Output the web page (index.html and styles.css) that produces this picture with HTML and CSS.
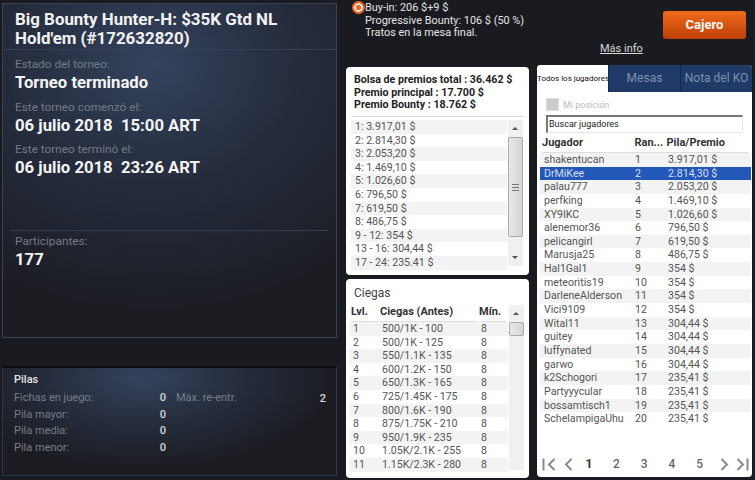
FILE: index.html
```html
<!DOCTYPE html>
<html lang="en">

<head>
    <meta charset="UTF-8">
    <title>Torneo</title>
    <link rel="stylesheet" href="styles.css">
</head>

<body>

    <div class="left">
        <div class="panel info">
            <h1>Big Bounty Hunter-H: $35K Gtd NL Hold'em (#172632820)</h1>
            <div class="info-body">
                <div class="label">Estado del torneo:</div>
                <div class="value status">Torneo terminado</div>
                <div class="label">Este torneo comenzó el:</div>
                <div class="value">06 julio 2018&nbsp; 15:00 ART</div>
                <div class="label">Este torneo terminó el:</div>
                <div class="value">06 julio 2018&nbsp; 23:26 ART</div>
            </div>
            <div class="players">
                <div class="label">Participantes:</div>
                <div class="value">177</div>
            </div>
        </div>

        <div class="panel stacks">
            <div class="stacks-title">Pilas</div>
            <div class="stacks-grid">
                <div class="stack-rows">
                    <div class="stack-row"><span>Fichas en juego:</span><b>0</b></div>
                    <div class="stack-row"><span>Pila mayor:</span><b>0</b></div>
                    <div class="stack-row"><span>Pila media:</span><b>0</b></div>
                    <div class="stack-row"><span>Pila menor:</span><b>0</b></div>
                </div>
                <div class="stack-row reentry"><span>Máx. re-entr.</span><b>2</b></div>
            </div>
        </div>
    </div>

    <div class="right">
        <div class="top">
            <div class="radio"></div>
            <div class="buyin">
                <div>Buy-in: 206 $+9 $</div>
                <div>Progressive Bounty: 106 $ (50 %)</div>
                <div>Tratos en la mesa final.</div>
            </div>
            <a class="more">Más info</a>
            <div class="cashier">Cajero</div>
        </div>

        <div class="columns">
            <div class="middle">
                <div class="card prizes">
                    <div class="prize-head">
                        <div>Bolsa de premios total : 36.462 $</div>
                        <div>Premio principal : 17.700 $</div>
                        <div>Premio Bounty : 18.762 $</div>
                    </div>
                    <div class="scroll-area">
                        <div class="rows">
                            <div class="row">1: 3.917,01 $</div>
                            <div class="row">2: 2.814,30 $</div>
                            <div class="row">3: 2.053,20 $</div>
                            <div class="row">4: 1.469,10 $</div>
                            <div class="row">5: 1.026,60 $</div>
                            <div class="row">6: 796,50 $</div>
                            <div class="row">7: 619,50 $</div>
                            <div class="row">8: 486,75 $</div>
                            <div class="row">9 - 12: 354 $</div>
                            <div class="row">13 - 16: 304,44 $</div>
                            <div class="row">17 - 24: 235.41 $</div>
                        </div>
                        <div class="scrollbar">
                            <div class="arrow up"></div>
                            <div class="thumb long"><div class="grip"></div></div>
                            <div class="arrow down"></div>
                        </div>
                    </div>
                </div>

                <div class="card blinds">
                    <div class="blinds-title">Ciegas</div>
                    <div class="scroll-area">
                        <div class="rows">
                            <div class="blinds-head"><span>Lvl.</span><span>Ciegas (Antes)</span><span>Mín.</span></div>
                            <div class="row blind"><span>1</span><span>500/1K - 100</span><span>8</span></div>
                            <div class="row blind"><span>2</span><span>500/1K - 125</span><span>8</span></div>
                            <div class="row blind"><span>3</span><span>550/1.1K - 135</span><span>8</span></div>
                            <div class="row blind"><span>4</span><span>600/1.2K - 150</span><span>8</span></div>
                            <div class="row blind"><span>5</span><span>650/1.3K - 165</span><span>8</span></div>
                            <div class="row blind"><span>6</span><span>725/1.45K - 175</span><span>8</span></div>
                            <div class="row blind"><span>7</span><span>800/1.6K - 190</span><span>8</span></div>
                            <div class="row blind"><span>8</span><span>875/1.75K - 210</span><span>8</span></div>
                            <div class="row blind"><span>9</span><span>950/1.9K - 235</span><span>8</span></div>
                            <div class="row blind"><span>10</span><span>1.05K/2.1K - 255</span><span>8</span></div>
                            <div class="row blind"><span>11</span><span>1.15K/2.3K - 280</span><span>8</span></div>
                        </div>
                        <div class="scrollbar blinds-bar">
                            <div class="arrow up"></div>
                            <div class="thumb"></div>
                        </div>
                    </div>
                </div>
            </div>

            <div class="card players-card">
                <div class="tabs">
                    <div class="tab active">Todos los jugadores</div>
                    <div class="tab tables">Mesas</div>
                    <div class="tab note">Nota del KO</div>
                </div>
                <div class="my-pos"><span class="checkbox"></span>Mi posición</div>
                <div class="search">Buscar jugadores</div>
                <div class="players-head"><span>Jugador</span><span>Ran...</span><span>Pila/Premio</span></div>
                <div class="player-rows">
                    <div class="row player"><span>shakentucan</span><span>1</span><span>3.917,01 $</span></div>
                    <div class="row player selected"><span>DrMiKee</span><span>2</span><span>2.814,30 $</span></div>
                    <div class="row player"><span>palau777</span><span>3</span><span>2.053,20 $</span></div>
                    <div class="row player"><span>perfking</span><span>4</span><span>1.469,10 $</span></div>
                    <div class="row player"><span>XY9IKC</span><span>5</span><span>1.026,60 $</span></div>
                    <div class="row player"><span>alenemor36</span><span>6</span><span>796,50 $</span></div>
                    <div class="row player"><span>pelicangirl</span><span>7</span><span>619,50 $</span></div>
                    <div class="row player"><span>Marusja25</span><span>8</span><span>486,75 $</span></div>
                    <div class="row player"><span>Hal1Gal1</span><span>9</span><span>354 $</span></div>
                    <div class="row player"><span>meteoritis19</span><span>10</span><span>354 $</span></div>
                    <div class="row player"><span>DarleneAlderson</span><span>11</span><span>354 $</span></div>
                    <div class="row player"><span>Vici9109</span><span>12</span><span>354 $</span></div>
                    <div class="row player"><span>Wital11</span><span>13</span><span>304,44 $</span></div>
                    <div class="row player"><span>guitey</span><span>14</span><span>304,44 $</span></div>
                    <div class="row player"><span>luffynated</span><span>15</span><span>304,44 $</span></div>
                    <div class="row player"><span>garwo</span><span>16</span><span>304,44 $</span></div>
                    <div class="row player"><span>k2Schogori</span><span>17</span><span>235,41 $</span></div>
                    <div class="row player"><span>Partyyycular</span><span>18</span><span>235,41 $</span></div>
                    <div class="row player"><span>bossamtisch1</span><span>19</span><span>235,41 $</span></div>
                    <div class="row player"><span>SchelampigaUhu</span><span>20</span><span>235,41 $</span></div>
                </div>
                <div class="pager">
                    <svg width="15" height="13" viewBox="0 0 15 13"><path d="M1.5 0.5V12.5M12.5 1L7 6.5L12.5 12" fill="none" stroke="#8a8a8a" stroke-width="2"/></svg>
                    <svg class="prev" width="9" height="13" viewBox="0 0 9 13"><path d="M7.5 1L2 6.5L7.5 12" fill="none" stroke="#8a8a8a" stroke-width="2"/></svg>
                    <span class="page current">1</span>
                    <span class="page">2</span>
                    <span class="page">3</span>
                    <span class="page">4</span>
                    <span class="page">5</span>
                    <svg class="next" width="9" height="13" viewBox="0 0 9 13"><path d="M1.5 1L7 6.5L1.5 12" fill="none" stroke="#8a8a8a" stroke-width="2"/></svg>
                    <svg class="last" width="13" height="13" viewBox="0 0 13 13"><path d="M11.5 0.5V12.5M1.5 1L7 6.5L1.5 12" fill="none" stroke="#8a8a8a" stroke-width="2"/></svg>
                </div>
            </div>
        </div>
    </div>

</body>

</html>
```

FILE: styles.css
```css
html,
body {
    height: 100%;
}

body {
    margin: 0;
    width: 755px;
    height: 480px;
    overflow: hidden;
    display: flex;
    background-color: #1a1b20;
    font-family: Roboto, sans-serif;
    color: #333;
}

/* left column */
.left {
    width: 335px;
    margin-left: 2px;
    padding-top: 3px;
    flex-shrink: 0;
}

.panel {
    box-sizing: border-box;
    border: 1px solid #3a4356;
    background: radial-gradient(ellipse 300px 250px at 45% 60px, #34435e 0%, #242b3b 50%, #1c1d23 100%);
}

.info {
    height: 335px;
}

h1 {
    margin: 0;
    padding: 6px 12px 1px;
    font-size: 16.9px;
    line-height: 19px;
    font-weight: 700;
    color: #f2f2f2;
    border-bottom: 1px solid #36405a;
}

.info-body {
    padding: 6px 12px 0;
    height: 174px;
}

.label {
    font-size: 11.8px;
    line-height: 16px;
    color: #747a85;
}

.value {
    font-size: 16.7px;
    line-height: 20px;
    font-weight: 700;
    color: #f4f4f4;
    margin: 1px 0 5px;
}

.value.status {
    margin-bottom: 6px;
}

.players {
    margin: 0 8px;
    padding: 2px 4px 0;
    border-top: 1px solid #333c50;
}

.stacks {
    height: 110px;
    margin-top: 28px;
    padding: 5px 10px 0 11px;
    border-color: #2f384a;
    border-top: 2px solid #0d0d10;
    background: radial-gradient(ellipse 190px 90px at 42% 10px, #34435e 0%, #232937 60%, #1c1d23 100%);
}

.stacks-title {
    font-size: 11px;
    line-height: 14px;
    font-weight: 500;
    color: #e4e4e4;
}

.stacks-grid {
    display: flex;
    margin-top: 3px;
}

.stack-rows {
    width: 152px;
}

.stack-row {
    display: flex;
    justify-content: space-between;
    font-size: 11px;
    line-height: 16.7px;
    color: #777d88;
}

.stack-row b {
    color: #d8d8d8;
    font-weight: 500;
}

.reentry {
    margin-left: 10px;
    flex-grow: 1;
}

.reentry b {
    margin-top: 1px;
}

/* right side */
.right {
    margin-left: 9px;
    width: 409px;
    flex-shrink: 0;
}

.top {
    box-sizing: border-box;
    height: 65px;
    padding: 1px 0 0 6px;
    position: relative;
    display: flex;
    font-size: 10.9px;
    line-height: 12.5px;
    color: #e4e4e4;
}

.radio {
    width: 13px;
    height: 13px;
    border-radius: 50%;
    background: radial-gradient(circle, #f0661e 0 2.4px, #fbf3ee 2.9px 4px, #f0661e 4.5px);
}

.buyin {
    margin-top: 1px;
}

.more {
    position: absolute;
    left: 254px;
    top: 42px;
    font-size: 11px;
    line-height: 14px;
    text-decoration: underline;
    color: #d8d8d8;
}

.cashier {
    position: absolute;
    left: 317px;
    top: 11px;
    width: 83px;
    height: 28px;
    border-radius: 3px;
    background: linear-gradient(#ee6c1b, #bf3f06);
    color: #f6f6f6;
    font-size: 13px;
    font-weight: 700;
    line-height: 28px;
    text-align: center;
}

.columns {
    display: flex;
    align-items: flex-start;
}

.middle {
    width: 183px;
    margin-top: 2px;
    margin-right: 8px;
}

.card {
    background-color: #fff;
    border-radius: 4px;
    overflow: hidden;
}

.prizes {
    height: 208px;
    padding: 7px 6px 0 5px;
    box-sizing: border-box;
}

.prize-head {
    padding: 0 3px 4px;
    font-size: 10.7px;
    line-height: 12.5px;
    font-weight: 700;
    color: #222;
    border-bottom: 1px solid #ddd;
    margin-bottom: 3px;
    height: 38px;
}

.scroll-area {
    display: flex;
}

.rows {
    flex-grow: 1;
    min-width: 0;
}

.row {
    height: 13.6px;
    font-size: 10.6px;
    line-height: 13.6px;
    color: #555;
    padding-left: 4px;
    white-space: nowrap;
    overflow: hidden;
}

.row:nth-child(odd) {
    background-color: #f3f3f3;
}

.scrollbar {
    width: 15px;
    height: 146px;
    margin-left: 1px;
    display: flex;
    flex-direction: column;
    background-color: #f0f0f0;
    flex-shrink: 0;
}

.arrow {
    height: 17px;
    position: relative;
}

.arrow::after {
    content: "";
    position: absolute;
    left: 4px;
    top: 7px;
    border-left: 3px solid transparent;
    border-right: 3px solid transparent;
}

.arrow.up::after {
    border-bottom: 3px solid #555;
}

.arrow.down {
    margin-top: auto;
}

.arrow.down::after {
    border-top: 3px solid #555;
}

.thumb {
    box-sizing: border-box;
    height: 14px;
    border: 1px solid #aaa;
    border-radius: 2px;
    background: linear-gradient(90deg, #e8e8e8, #d4d4d4);
}

.thumb.long {
    height: 100px;
    display: flex;
    align-items: center;
    justify-content: center;
}

.grip {
    width: 7px;
    height: 7px;
    background: repeating-linear-gradient(#777 0 1px, transparent 1px 3px);
}

.blinds {
    height: 199px;
    margin-top: 4px;
    padding: 0 5px 0 3px;
    box-sizing: border-box;
}

.blinds-title {
    font-size: 12px;
    line-height: 14px;
    padding: 7px 5px 5px;
    color: #444;
}

.blinds-head {
    display: grid;
    grid-template-columns: 29px 99px 1fr;
    font-size: 11px;
    line-height: 14px;
    font-weight: 700;
    color: #333;
    padding-left: 2px;
}

.blinds-head span {
    height: 16px;
    border-bottom: 1px solid #ddd;
    margin-right: 2px;
}

.blind {
    display: grid;
    grid-template-columns: 29px 99px 1fr;
}

.blinds .row:nth-child(odd) {
    background-color: transparent;
}

.blinds .row:nth-child(even) {
    background-color: #f3f3f3;
}

.blinds-bar {
    height: 165px;
    width: 15px;
}

/* player list */
.players-card {
    width: 215px;
    height: 412px;
    position: relative;
}

.tabs {
    display: flex;
    height: 27px;
    margin-bottom: 6px;
}

.tab {
    box-sizing: border-box;
    height: 27px;
    background-color: #203a68;
    color: #7e8fa9;
    font-size: 12px;
    line-height: 27px;
    text-align: center;
    border-left: 1px solid #14264a;
}

.tab.active {
    width: 71px;
    background-color: #fff;
    color: #111;
    font-size: 8px;
    border: 0;
    white-space: nowrap;
}

.tab.tables {
    width: 72px;
}

.tab.note {
    width: 72px;
}

.my-pos {
    display: flex;
    align-items: center;
    height: 13px;
    padding-left: 9px;
    font-size: 9px;
    color: #bbb;
}

.checkbox {
    width: 11px;
    height: 11px;
    background-color: #ccc;
    border: 1px solid #ddd;
    margin-right: 4px;
}

.search {
    box-sizing: border-box;
    margin: 4px 9px 0 9px;
    height: 18px;
    border: 1px solid #e6e6e6;
    border-top: 2px solid #777;
    border-left: 2px solid #777;
    font-size: 9px;
    line-height: 14px;
    padding-left: 1px;
    color: #222;
}

.players-head {
    display: grid;
    grid-template-columns: 92.5px 32px 1fr;
    margin: 2px 4px 0 5px;
    height: 17px;
    font-size: 11px;
    line-height: 16px;
    font-weight: 700;
    color: #333;
    border-bottom: 1px solid #ddd;
}

.player-rows {
    margin: 0 1px 0 3px;
}

.player {
    display: grid;
    grid-template-columns: 91px 33px 1fr;
    padding-left: 4px;
    height: 13.65px;
    line-height: 14.6px;
}

.player span:first-child {
    overflow: hidden;
}

.player.selected {
    background-color: #2358b8;
    color: #d6def0;
}

.pager {
    position: absolute;
    left: 5px;
    bottom: 6px;
    display: flex;
    align-items: center;
}

.prev,
.last {
    margin-left: 7px;
}

.prev {
    margin-right: 2px;
}

.next {
    margin-left: 6.5px;
}

.page {
    width: 27.7px;
    text-align: center;
    font-size: 12px;
    color: #666;
    font-weight: 500;
}

.page.current {
    font-weight: 700;
    color: #333;
}
```
